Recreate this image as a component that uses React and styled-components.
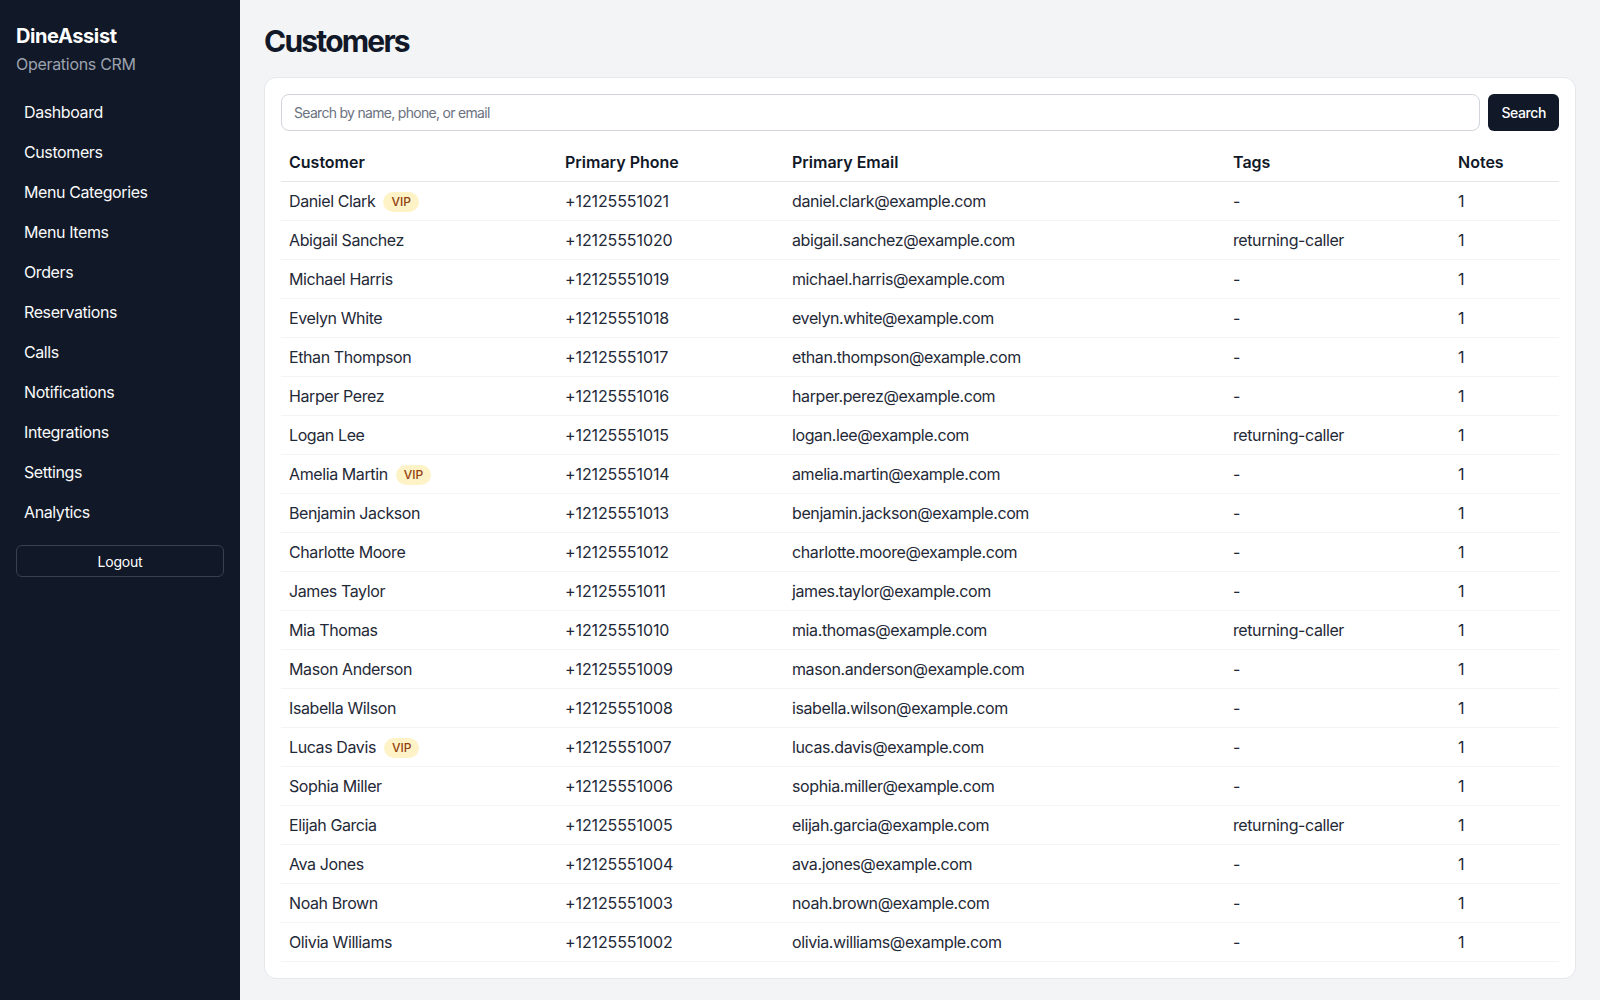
import React, { useState } from 'react';
import styled, { createGlobalStyle } from 'styled-components';

const GlobalStyle = createGlobalStyle`
	* {
		box-sizing: border-box;
	}
	body {
		margin: 0;
		font-family: Inter, 'Noto Sans', sans-serif;
		background-color: #f3f4f6;
		color: #111827;
	}
`;

const customers = [
	{ name: 'Daniel Clark', vip: true, phone: '+12125551021', email: 'daniel.clark@example.com', tags: '-', notes: 1 },
	{ name: 'Abigail Sanchez', phone: '+12125551020', email: 'abigail.sanchez@example.com', tags: 'returning-caller', notes: 1 },
	{ name: 'Michael Harris', phone: '+12125551019', email: 'michael.harris@example.com', tags: '-', notes: 1 },
	{ name: 'Evelyn White', phone: '+12125551018', email: 'evelyn.white@example.com', tags: '-', notes: 1 },
	{ name: 'Ethan Thompson', phone: '+12125551017', email: 'ethan.thompson@example.com', tags: '-', notes: 1 },
	{ name: 'Harper Perez', phone: '+12125551016', email: 'harper.perez@example.com', tags: '-', notes: 1 },
	{ name: 'Logan Lee', phone: '+12125551015', email: 'logan.lee@example.com', tags: 'returning-caller', notes: 1 },
	{ name: 'Amelia Martin', vip: true, phone: '+12125551014', email: 'amelia.martin@example.com', tags: '-', notes: 1 },
	{ name: 'Benjamin Jackson', phone: '+12125551013', email: 'benjamin.jackson@example.com', tags: '-', notes: 1 },
	{ name: 'Charlotte Moore', phone: '+12125551012', email: 'charlotte.moore@example.com', tags: '-', notes: 1 },
	{ name: 'James Taylor', phone: '+12125551011', email: 'james.taylor@example.com', tags: '-', notes: 1 },
	{ name: 'Mia Thomas', phone: '+12125551010', email: 'mia.thomas@example.com', tags: 'returning-caller', notes: 1 },
	{ name: 'Mason Anderson', phone: '+12125551009', email: 'mason.anderson@example.com', tags: '-', notes: 1 },
	{ name: 'Isabella Wilson', phone: '+12125551008', email: 'isabella.wilson@example.com', tags: '-', notes: 1 },
	{ name: 'Lucas Davis', vip: true, phone: '+12125551007', email: 'lucas.davis@example.com', tags: '-', notes: 1 },
	{ name: 'Sophia Miller', phone: '+12125551006', email: 'sophia.miller@example.com', tags: '-', notes: 1 },
	{ name: 'Elijah Garcia', phone: '+12125551005', email: 'elijah.garcia@example.com', tags: 'returning-caller', notes: 1 },
	{ name: 'Ava Jones', phone: '+12125551004', email: 'ava.jones@example.com', tags: '-', notes: 1 },
	{ name: 'Noah Brown', phone: '+12125551003', email: 'noah.brown@example.com', tags: '-', notes: 1 },
	{ name: 'Olivia Williams', phone: '+12125551002', email: 'olivia.williams@example.com', tags: '-', notes: 1 },
];

const navItems = [
	'Dashboard',
	'Customers',
	'Menu Categories',
	'Menu Items',
	'Orders',
	'Reservations',
	'Calls',
	'Notifications',
	'Integrations',
	'Settings',
	'Analytics',
];

const columns = [
	{ label: 'Customer', width: 276 },
	{ label: 'Primary Phone', width: 227 },
	{ label: 'Primary Email', width: 441 },
	{ label: 'Tags', width: 225 },
	{ label: 'Notes' },
];

const App = () => {
	const [query, setQuery] = useState('');

	return (
		<>
			<GlobalStyle />
			<StyledLayout>
				<StyledSidebar>
					<StyledBrand>DineAssist</StyledBrand>
					<StyledSubtitle>Operations CRM</StyledSubtitle>
					<StyledNav>
						{navItems.map((item) => (
							<StyledNavLink key={item} href='#'>
								{item}
							</StyledNavLink>
						))}
					</StyledNav>
					<StyledLogout>Logout</StyledLogout>
				</StyledSidebar>
				<StyledMain>
					<StyledTitle>Customers</StyledTitle>
					<StyledCard>
						<StyledSearchRow>
							<StyledInput
								type='text'
								placeholder='Search by name, phone, or email'
								value={query}
								onChange={(e) => setQuery(e.target.value)}
							/>
							<StyledSearchButton>Search</StyledSearchButton>
						</StyledSearchRow>
						<StyledTable>
							<colgroup>
								{columns.map((col) => (
									<col key={col.label} style={col.width ? { width: col.width } : undefined} />
								))}
							</colgroup>
							<thead>
								<tr>
									{columns.map((col) => (
										<th key={col.label}>{col.label}</th>
									))}
								</tr>
							</thead>
							<tbody>
								{customers.map((c) => (
									<tr key={c.phone}>
										<td>
											{c.name}
											{c.vip && <StyledBadge>VIP</StyledBadge>}
										</td>
										<StyledNumberCell>{c.phone}</StyledNumberCell>
										<td>{c.email}</td>
										<td>{c.tags}</td>
										<td>{c.notes}</td>
									</tr>
								))}
							</tbody>
						</StyledTable>
					</StyledCard>
				</StyledMain>
			</StyledLayout>
		</>
	);
};

export default App;

const StyledLayout = styled.div`
	display: flex;
	min-height: 100vh;
`;

const StyledSidebar = styled.aside`
	width: 240px;
	flex-shrink: 0;
	background-color: #111827;
	color: #ffffff;
	padding: 22px 16px 20px;
	display: flex;
	flex-direction: column;
`;

const StyledBrand = styled.div`
	font-size: 20px;
	line-height: 28px;
	font-weight: 700;
	letter-spacing: -0.4px;
`;

const StyledSubtitle = styled.div`
	margin-top: 2px;
	font-size: 16px;
	line-height: 24px;
	color: #9ca3af;
	letter-spacing: -0.3px;
`;

const StyledNav = styled.nav`
	display: flex;
	flex-direction: column;
	margin-top: 16px;
`;

const StyledNavLink = styled.a`
	display: block;
	padding: 8px;
	font-size: 16px;
	line-height: 24px;
	font-weight: 400;
	letter-spacing: -0.4px;
	color: #f9fafb;
	text-decoration: none;
	border-radius: 6px;
	&:hover {
		background-color: #1f2937;
	}
`;

const StyledLogout = styled.button`
	margin-top: 13px;
	height: 32px;
	width: 100%;
	font-family: inherit;
	font-size: 14px;
	font-weight: 400;
	letter-spacing: -0.2px;
	color: #ffffff;
	background-color: transparent;
	border: 1px solid #374151;
	border-radius: 6px;
	cursor: pointer;
`;

const StyledMain = styled.main`
	flex: 1;
	padding: 23px 24px 24px;
	min-width: 0;
`;

const StyledTitle = styled.h1`
	margin: 0 0 18px;
	font-size: 30px;
	line-height: 36px;
	font-weight: 700;
	letter-spacing: -1.8px;
	color: #111827;
`;

const StyledCard = styled.section`
	background-color: #ffffff;
	border: 1px solid #e5e7eb;
	border-radius: 12px;
	padding: 16px;
`;

const StyledSearchRow = styled.div`
	display: flex;
	gap: 8px;
`;

const StyledInput = styled.input`
	flex: 1;
	height: 37px;
	padding: 0 12px;
	font-family: inherit;
	font-size: 14px;
	letter-spacing: -0.7px;
	color: #111827;
	border: 1px solid #d1d5db;
	border-radius: 8px;
	outline: none;
	&::placeholder {
		color: #6b7280;
	}
`;

const StyledSearchButton = styled.button`
	height: 37px;
	padding: 0 13px;
	font-family: inherit;
	font-size: 14px;
	font-weight: 500;
	letter-spacing: -0.4px;
	color: #ffffff;
	background-color: #111827;
	border: none;
	border-radius: 6px;
	cursor: pointer;
`;

const StyledTable = styled.table`
	width: 100%;
	margin-top: 12px;
	border-collapse: collapse;
	table-layout: fixed;
	font-size: 16px;
	line-height: 24px;
	th,
	td {
		padding: 7px 8px;
		text-align: left;
		white-space: nowrap;
	}
	th {
		font-weight: 600;
		color: #111827;
		border-bottom: 1px solid #e5e7eb;
	}
	td {
		color: #1f2937;
		letter-spacing: -0.4px;
		border-bottom: 1px solid #f3f4f6;
	}
`;

const StyledNumberCell = styled.td`
	&& {
		letter-spacing: -0.1px;
	}
`;

const StyledBadge = styled.span`
	display: inline-block;
	margin-left: 8px;
	padding: 2px 8px;
	font-size: 12px;
	line-height: 16px;
	font-weight: 500;
	letter-spacing: 0;
	color: #92400e;
	background-color: #fef3c7;
	border-radius: 9999px;
	vertical-align: 1px;
`;
